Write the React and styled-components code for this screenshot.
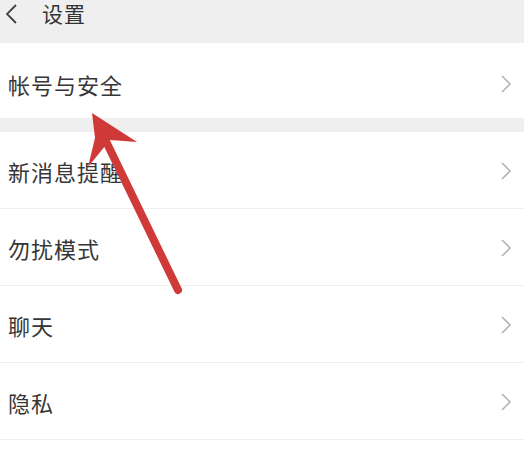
import React from "react";
import styled, { createGlobalStyle } from "styled-components";

const GlobalStyle = createGlobalStyle`
  html, body {
    margin: 0;
    padding: 0;
    background: #ffffff;
  }
  body {
    font-family: "Noto Sans CJK SC", "Noto Sans", sans-serif;
    width: 524px;
    height: 458px;
    overflow: hidden;
  }
`;

const Page = styled.div`
  position: relative;
  width: 524px;
  height: 458px;
  overflow: hidden;
  background: #ffffff;
`;

const Header = styled.div`
  height: 43px;
  background: #efefef;
  display: flex;
  align-items: flex-start;
  padding-left: 4px;
  box-sizing: border-box;
`;

const BackBtn = styled.div`
  width: 16px;
  height: 27px;
  display: flex;
  align-items: center;
`;

const Title = styled.div`
  margin-left: 22px;
  font-size: 21px;
  line-height: 27px;
  color: #333333;
  letter-spacing: 1px;
`;

const Group = styled.div`
  background: #ffffff;
`;

const Gap = styled.div`
  height: 14px;
  background: #efefef;
`;

const Row = styled.div`
  height: ${(p) => p.h}px;
  display: flex;
  align-items: center;
  justify-content: space-between;
  padding: ${(p) => p.pt || 0}px 12px 0 8px;
  box-sizing: border-box;
  border-bottom: ${(p) => (p.divider ? "1px solid #f0f0f0" : "none")};
`;

const Label = styled.span`
  font-size: 22px;
  color: #363636;
  letter-spacing: 1px;
`;

const Chevron = () => (
  <svg width="12" height="20" viewBox="0 0 12 20">
    <path d="M2 2 L10 10 L2 18" fill="none" stroke="#b4b4b4" strokeWidth="1.6" />
  </svg>
);

const BackIcon = () => (
  <svg width="14" height="20" viewBox="0 0 14 20">
    <path d="M12 1 L3 10 L12 19" fill="none" stroke="#444" strokeWidth="1.8" />
  </svg>
);

const Arrow = styled.svg`
  position: absolute;
  left: 0;
  top: 0;
  pointer-events: none;
`;

const rows = ["新消息提醒", "勿扰模式", "聊天", "隐私"];

export default function App() {
  return (
    <Page>
      <GlobalStyle />
      <Header>
        <BackBtn>
          <BackIcon />
        </BackBtn>
        <Title>设置</Title>
      </Header>
      <Group>
        <Row h={75} pt={6}>
          <Label>帐号与安全</Label>
          <Chevron />
        </Row>
      </Group>
      <Gap />
      <Group>
        {rows.map((r) => (
          <Row key={r} h={77} pt={2} divider>
            <Label>{r}</Label>
            <Chevron />
          </Row>
        ))}
        <Row h={30} />
      </Group>
      <Arrow width="524" height="458" viewBox="0 0 524 458">
        <line x1="178" y1="290" x2="102" y2="133" stroke="#cf3a38" strokeWidth="8" strokeLinecap="round" />
        <polygon points="92,113 137,142 110,140 88,167 95,138" fill="#cf3a38" />
      </Arrow>
    </Page>
  );
}
